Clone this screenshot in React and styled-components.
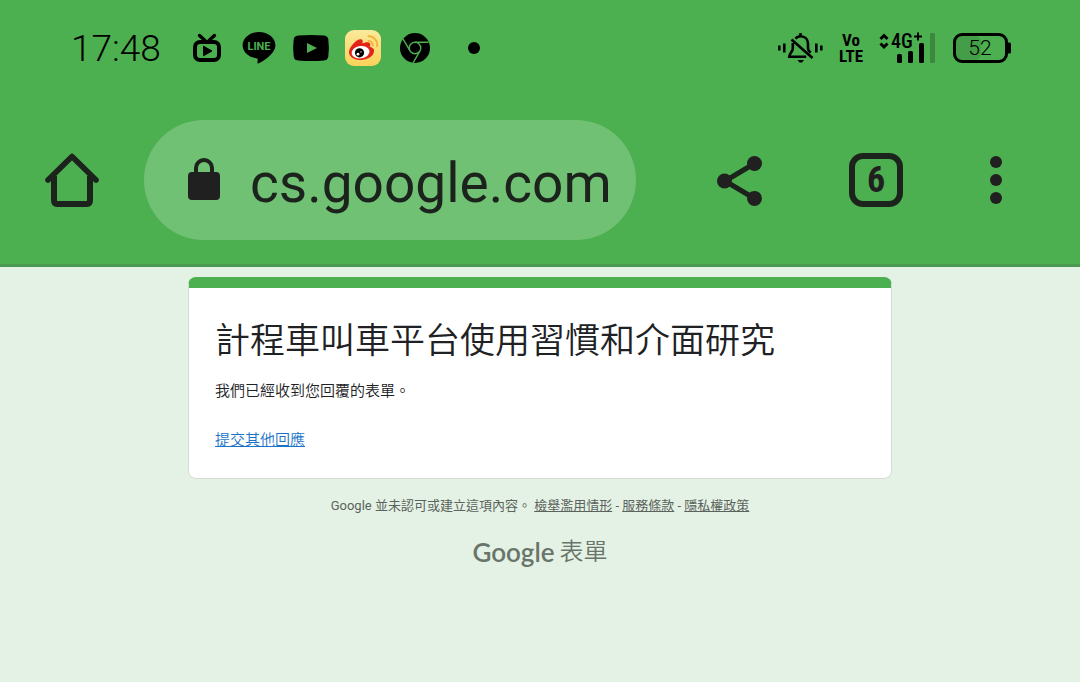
import React from 'react';
import styled, { createGlobalStyle } from 'styled-components';

const green = '#4caf50';
const ink = '#202020';

const GlobalStyle = createGlobalStyle`
  * {
    box-sizing: border-box;
  }
  body {
    margin: 0;
    min-height: 100vh;
    background: #e4f2e5;
    color: #202124;
    font-family: Roboto, 'Noto Sans CJK TC', sans-serif;
  }
`;

const Header = styled.header`
  background: ${green};
  border-bottom: 3px solid #499a50;
`;

const StatusBar = styled.div`
  display: flex;
  justify-content: space-between;
  align-items: center;
  height: 96px;
  padding: 0 69px 0 71px;
  color: #000;
`;

const StatusGroup = styled.div`
  display: flex;
  align-items: center;
  gap: 16px;
`;

const Clock = styled.time`
  margin-right: 12px;
  font-family: Roboto, sans-serif;
  font-size: 37px;
  font-weight: 300;
`;

const StatusIcon = styled.svg`
  display: block;
  flex: none;
  overflow: visible;
`;

const Dot = styled.span`
  width: 12px;
  height: 12px;
  margin-left: 19px;
  border-radius: 50%;
  background: #000;
`;

const Volte = styled.div`
  display: flex;
  flex-direction: column;
  align-items: center;
  font-family: 'Roboto Condensed', 'Liberation Sans Narrow', sans-serif;
  font-size: 17px;
  font-weight: 700;
  line-height: 16px;
`;

const Toolbar = styled.div`
  display: flex;
  align-items: center;
  padding: 24px 32px 24px 0;
`;

const ToolButton = styled.button`
  display: flex;
  justify-content: center;
  align-items: center;
  flex: none;
  width: ${(props) => props.$width};
  height: 96px;
  padding: 0;
  border: none;
  background: none;
  color: ${ink};
  cursor: pointer;
`;

const AddressBar = styled.label`
  display: flex;
  align-items: center;
  flex: 1;
  min-width: 0;
  height: 120px;
  margin-right: 36px;
  padding: 0 20px 0 44px;
  border-radius: 60px;
  background: #70c174;
  color: ${ink};
`;

const AddressInput = styled.input`
  flex: 1;
  min-width: 0;
  margin-left: 30px;
  padding: 6px 0 0;
  border: none;
  outline: none;
  background: none;
  color: #1b231c;
  font-family: Roboto, sans-serif;
  font-size: 55px;
`;

const TabCount = styled.span`
  display: flex;
  justify-content: center;
  align-items: center;
  width: 54px;
  height: 54px;
  border: 6px solid #1c221c;
  border-radius: 14px;
  font-family: 'Roboto Condensed', 'Liberation Sans Narrow', sans-serif;
  font-size: 36px;
  font-weight: 700;
`;

const Page = styled.main`
  max-width: 704px;
  margin: 0 auto;
  padding: 10px 0 24px;
`;

const Card = styled.section`
  padding: 30px 26px 26px;
  border: 1px solid #d5dcd6;
  border-top: 11px solid ${green};
  border-radius: 8px;
  background: #fff;
`;

const Title = styled.h1`
  margin: 0;
  font-size: 35px;
  font-weight: 350;
  line-height: 48px;
`;

const Message = styled.p`
  margin: 13px 0 25px;
  font-size: 15px;
  font-weight: 350;
  line-height: 24px;
`;

const AgainLink = styled.a`
  display: block;
  color: #1a73c8;
  font-size: 15px;
  font-weight: 350;
  line-height: 24px;
`;

const Disclaimer = styled.p`
  margin: 15px 0 18px;
  color: #5b635c;
  font-size: 13px;
  line-height: 24px;
  text-align: center;

  & > a {
    color: inherit;
  }
`;

const Brand = styled.a`
  display: flex;
  justify-content: center;
  align-items: center;
  gap: 5px;
  color: #69756b;
  font-size: 24px;
  font-weight: 350;
  line-height: 32px;
  text-decoration: none;
`;

const BrandName = styled.span`
  font-family: Lato, sans-serif;
  font-size: 26px;
  font-weight: 600;
`;

const BilibiliIcon = () => (
  <StatusIcon width='36' height='36' viewBox='0 0 36 36' fill='none' stroke='#000'>
    <rect x='6' y='12' width='24' height='18' rx='5' strokeWidth='4' />
    <path d='M10.500 5.500l5.500 5M25.500 5.500l-5.500 5' strokeWidth='3.400' strokeLinecap='round' />
    <path d='M14.500 16.200v9.600l8.500-4.800z' fill='#000' strokeWidth='1' strokeLinejoin='round' />
  </StatusIcon>
);

const LineIcon = () => (
  <StatusIcon width='36' height='36' viewBox='0 0 36 36'>
    <path d='M18 2C9 2 1.600 7.900 1.600 15.200c0 6.500 5.900 12 13.600 13 2.200.4 1.500 1.900 1.200 4.300-.1.900.5 1.200 1.500.7C22.500 30.900 34.400 23.700 34.400 15.200 34.400 7.900 27 2 18 2z' />
    <text x='18' y='20' fill={green} fontFamily='Roboto, sans-serif' fontSize='11' fontWeight='700' textAnchor='middle'>
      LINE
    </text>
  </StatusIcon>
);

const YoutubeIcon = () => (
  <StatusIcon width='36' height='36' viewBox='0 0 36 36'>
    <path d='M5 5.600Q18 4.400 31 5.600 34.800 6 35.300 9.500 36.500 18 35.300 26.500 34.800 30 31 30.400 18 31.600 5 30.400 1.200 30 .7 26.500-.5 18 .7 9.500 1.200 6 5 5.600z' />
    <path d='M14 13v10l10-5z' fill={green} />
  </StatusIcon>
);

const WeiboIcon = () => (
  <StatusIcon width='36' height='36' viewBox='0 0 36 36'>
    <defs>
      <linearGradient id='weibo' x1='0' y1='0' x2='0' y2='1'>
        <stop offset='0' stopColor='#fbe99b' />
        <stop offset='1' stopColor='#fbd259' />
      </linearGradient>
    </defs>
    <rect width='36' height='36' rx='9' fill='url(#weibo)' />
    <path
      d='M4 22.500C3.800 17 12 8.500 16 9.200c2 .4 2 2.600 1.300 4.400 3.500-1.900 8-2.200 8 1 0 1-.4 1.700-.5 2.200 3 .7 4.600 2.200 4.200 4.800C28.300 26.800 22 30.400 14.600 30 8.600 29.700 4.200 26.500 4 22.500z'
      fill='#e42319'
    />
    <ellipse cx='15.600' cy='22.200' rx='9' ry='6.200' fill='#fff' transform='rotate(-8 15.600 22.200)' />
    <circle cx='14.500' cy='22.800' r='4.600' fill='#000' />
    <circle cx='13' cy='24.200' r='1.400' fill='#fff' />
    <circle cx='16' cy='21.900' r='.7' fill='#fff' />
    <path
      d='M23.500 6.200a8.600 8.600 0 0 1 8.600 10.200M23.500 10.800a4.300 4.300 0 0 1 4.300 4.800'
      fill='none'
      stroke='#f5ae35'
      strokeWidth='1.800'
      strokeLinecap='round'
    />
  </StatusIcon>
);

const ChromeIcon = () => (
  <StatusIcon width='36' height='36' viewBox='0 0 36 36'>
    <circle cx='18' cy='18' r='15' />
    <g fill='none' stroke={green} strokeWidth='1.400'>
      <circle cx='18' cy='18' r='5.800' />
      <path d='M18 12.200h13.500M13 20.900L6 8.900M23 20.900l-6.900 12' />
    </g>
  </StatusIcon>
);

const SilentIcon = () => (
  <StatusIcon width='45' height='30' viewBox='0 0 45 30' fill='none' stroke='#000' strokeWidth='2.600'>
    <path d='M1.300 12.500v5M6.300 10.500v9M38.300 10.500v9M43.300 12.500v5' />
    <path d='M22.500 0v3M17.500 5.800c1.300-1.800 3-2.600 5-2.600 4.600 0 7.500 3.300 7.500 7.600v4.700c0 1.600 1 2.800 2.700 4.300M14.800 10v5.500c0 3.200-3.600 5-3.600 8.300h17' />
    <path d='M13.500 6.500l21 18.500' />
    <path d='M19.500 27h6.500l-2 2.500h-2.500z' fill='#000' stroke='none' />
  </StatusIcon>
);

const SignalIcon = () => (
  <StatusIcon width='58' height='32' viewBox='0 0 58 32'>
    <path d='M1.500 7L5 3.500 8.500 7M1.500 11.500L5 15l3.500-3.500' fill='none' stroke='#000' strokeWidth='3' />
    <text x='12' y='16' fontFamily="'Roboto Condensed', sans-serif" fontSize='20' fontWeight='500'>
      4G
    </text>
    <path d='M39 .5v8M35 4.500h8' stroke='#000' strokeWidth='2' />
    <rect x='18' y='22' width='5' height='9' rx='1.500' />
    <rect x='29' y='19' width='5' height='12' rx='1.500' />
    <rect x='40' y='11' width='5' height='20' rx='1.500' />
    <rect x='51' y='1' width='5' height='30' rx='1.500' opacity='.22' />
  </StatusIcon>
);

const BatteryIcon = () => (
  <StatusIcon width='58' height='30' viewBox='0 0 58 30'>
    <rect x='3' y='3' width='25' height='24' rx='6' opacity='.1' />
    <rect x='1.500' y='1.500' width='52' height='27' rx='7.500' fill='none' stroke='#000' strokeWidth='3' />
    <path d='M55 9.500h1.500q1.500 0 1.500 1.500v8q0 1.500-1.500 1.500H55z' />
    <text x='27' y='22' fontFamily='Roboto, sans-serif' fontSize='21' fontWeight='300' textAnchor='middle'>
      52
    </text>
  </StatusIcon>
);

const HomeIcon = () => (
  <svg width='54' height='54' viewBox='0 0 54 54' fill='none' stroke='#1c221c' strokeWidth='6'>
    <path d='M9 23v24q0 4 3 4h30q3 0 3-4V23' />
    <path d='M3 27L27 3.500 51 27' strokeLinecap='round' strokeLinejoin='round' strokeWidth='5.600' />
  </svg>
);

const LockIcon = () => (
  <svg width='32' height='44' viewBox='0 0 32 44' fill='currentColor'>
    <rect y='14' width='32' height='28' rx='4' />
    <path d='M8 16v-6a8 8 0 0 1 16 0v6' fill='none' stroke='#1c221c' strokeWidth='4' />
  </svg>
);

const ShareIcon = () => (
  <svg width='46' height='52' viewBox='0 0 46 52' fill='currentColor'>
    <path d='M37.500 9.500L8 27l29.500 17.500' fill='none' stroke='#1c221c' strokeWidth='5' />
    <circle cx='37.500' cy='9.500' r='7.500' />
    <circle cx='7.500' cy='27' r='7.500' />
    <circle cx='37.500' cy='44.400' r='7.500' />
  </svg>
);

const MoreIcon = () => (
  <svg width='12' height='48' viewBox='0 0 12 48' fill='currentColor'>
    <circle cx='6' cy='6' r='6' />
    <circle cx='6' cy='24' r='6' />
    <circle cx='6' cy='42' r='6' />
  </svg>
);

function App() {
  return (
    <>
      <GlobalStyle />
      <Header>
        <StatusBar>
          <StatusGroup>
            <Clock>17:48</Clock>
            <BilibiliIcon />
            <LineIcon />
            <YoutubeIcon />
            <WeiboIcon />
            <ChromeIcon />
            <Dot />
          </StatusGroup>
          <StatusGroup>
            <SilentIcon />
            <Volte>
              <span>Vo</span>
              <span>LTE</span>
            </Volte>
            <SignalIcon />
            <BatteryIcon />
          </StatusGroup>
        </StatusBar>
        <Toolbar>
          <ToolButton $width='144px' aria-label='首頁'>
            <HomeIcon />
          </ToolButton>
          <AddressBar>
            <LockIcon />
            <AddressInput type='text' aria-label='網址' defaultValue='cs.google.com' />
          </AddressBar>
          <ToolButton $width='136px' aria-label='分享'>
            <ShareIcon />
          </ToolButton>
          <ToolButton $width='136px'>
            <TabCount>6</TabCount>
          </ToolButton>
          <ToolButton $width='104px' aria-label='更多'>
            <MoreIcon />
          </ToolButton>
        </Toolbar>
      </Header>
      <Page>
        <Card>
          <Title>計程車叫車平台使用習慣和介面研究</Title>
          <Message>我們已經收到您回覆的表單。</Message>
          <AgainLink href='#again'>提交其他回應</AgainLink>
        </Card>
        <Disclaimer>
          Google 並未認可或建立這項內容。 <a href='#report'>檢舉濫用情形</a> - <a href='#terms'>服務條款</a> -{' '}
          <a href='#privacy'>隱私權政策</a>
        </Disclaimer>
        <Brand href='#forms'>
          <BrandName>Google</BrandName>
          表單
        </Brand>
      </Page>
    </>
  );
}

export default App;
